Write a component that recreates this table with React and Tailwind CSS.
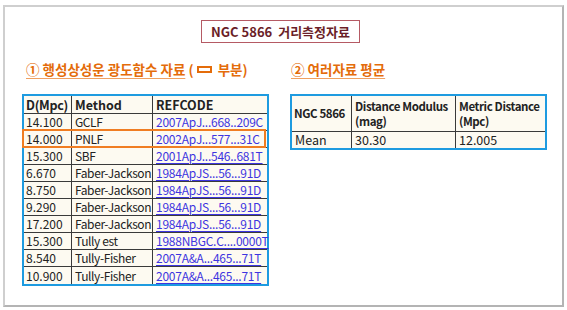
const rows = [
  ['14.100', 'GCLF', '2007ApJ...668..209C'],
  ['14.000', 'PNLF', '2002ApJ...577...31C', true],
  ['15.300', 'SBF', '2001ApJ...546..681T'],
  ['6.670', 'Faber-Jackson', '1984ApJS...56...91D'],
  ['8.750', 'Faber-Jackson', '1984ApJS...56...91D'],
  ['9.290', 'Faber-Jackson', '1984ApJS...56...91D'],
  ['17.200', 'Faber-Jackson', '1984ApJS...56...91D'],
  ['15.300', 'Tully est', '1988NBGC.C....0000T'],
  ['8.540', 'Tully-Fisher', '2007A&A...465...71T'],
  ['10.900', 'Tully-Fisher', '2007A&A...465...71T'],
];

const font = { fontFamily: '"Noto Sans CJK KR", sans-serif' };

export default function App() {
  return (
    <div className="w-[567px] h-[310px] bg-white overflow-hidden" style={font}>
      <div className="ml-[3px] pt-[5px]">
        <div className="w-[561px] h-[302px] border-2 border-t-[#cfcfcf] border-l-[#cfcfcf] border-r-[#b4b4b4] border-b-[#b4b4b4] flex flex-col">
          {/* Title */}
          <div className="flex justify-center mt-[13px] pr-[6px]">
            <div className="border border-[#b55a64] px-[9px] h-[23px] flex items-center text-[13px] font-bold text-[#6b1e28]">
              NGC 5866&nbsp; 거리측정자료
            </div>
          </div>

          <div className="flex mt-[11px] pl-[17px]">
            {/* Left */}
            <div className="w-[247px] flex flex-col">
              <div className="pl-[4px] h-[30px] flex items-center text-[13.5px] font-bold text-[#e46c0a] whitespace-nowrap">
                <span className="underline underline-offset-[3px] decoration-[#f0a060]">① 행성상성운 광도함수 자료</span>
                <span>&nbsp;(&nbsp;</span>
                <span className="inline-block w-[15px] h-[7px] border-2 border-[#e46c0a]"></span>
                <span>&nbsp; 부분)</span>
              </div>
              <div className="mt-[10px] w-[247px] border-2 border-[#1e9be0] bg-[#fdfaf1] text-[12px] leading-[14px] text-[#222] whitespace-nowrap">
                <div className="grid grid-cols-[48px_81px_1fr] h-[18px] font-bold border-b border-[#3a3a3a] items-center text-[12.5px]">
                  <div className="pl-[2px] h-full flex items-center border-r border-[#3a3a3a] tracking-[-0.3px]">D(Mpc)</div>
                  <div className="pl-[3px] h-full flex items-center border-r border-[#3a3a3a]">Method</div>
                  <div className="pl-[3px]">REFCODE</div>
                </div>
                {rows.map((r, i) => (
                  <div
                    key={i}
                    className={`relative grid grid-cols-[48px_81px_1fr] h-[17px] items-center ${i < rows.length - 1 ? 'border-b border-[#3a3a3a]' : ''}`}
                  >
                    <div className="pl-[2px] h-full flex items-center border-r border-[#3a3a3a]">{r[0]}</div>
                    <div className="pl-[3px] h-full flex items-center border-r border-[#3a3a3a] tracking-[-0.4px]">{r[1]}</div>
                    <div className="pl-[3px] tracking-[-0.25px]">
                      <span className="text-[#3d35e0] underline underline-offset-[2px]">{r[2]}</span>
                    </div>
                    {r[3] && (
                      <div className="absolute left-[-2px] right-[1px] top-[-2px] bottom-[-1px] border-2 border-[#f07d22]"></div>
                    )}
                  </div>
                ))}
              </div>
            </div>

            {/* Right */}
            <div className="ml-[21px] w-[257px] flex flex-col">
              <div className="pl-[1px] h-[30px] flex items-center text-[13.5px] font-bold text-[#e46c0a]">
                <span className="underline underline-offset-[3px] decoration-[#f0a060]">② 여러자료 평균</span>
              </div>
              <div className="mt-[10px] w-[257px] border-2 border-[#1e9be0] bg-[#fdfaf1] text-[12.5px] leading-[14px] text-[#222] whitespace-nowrap">
                <div className="grid grid-cols-[60px_104px_1fr] h-[36px] font-bold border-b border-[#3a3a3a] leading-[15px] text-[11.5px] tracking-[-0.4px]">
                  <div className="pl-[2px] flex items-center border-r border-[#3a3a3a]">NGC 5866</div>
                  <div className="pl-[3px] flex flex-col justify-center border-r border-[#3a3a3a]">
                    <span>Distance Modulus</span>
                    <span>(mag)</span>
                  </div>
                  <div className="pl-[3px] flex flex-col justify-center">
                    <span>Metric Distance</span>
                    <span>(Mpc)</span>
                  </div>
                </div>
                <div className="grid grid-cols-[60px_104px_1fr] h-[16px] items-center">
                  <div className="pl-[3px] h-full flex items-center border-r border-[#3a3a3a]">Mean</div>
                  <div className="pl-[3px] h-full flex items-center border-r border-[#3a3a3a]">30.30</div>
                  <div className="pl-[3px]">12.005</div>
                </div>
              </div>
            </div>
          </div>
        </div>
      </div>
    </div>
  );
}
